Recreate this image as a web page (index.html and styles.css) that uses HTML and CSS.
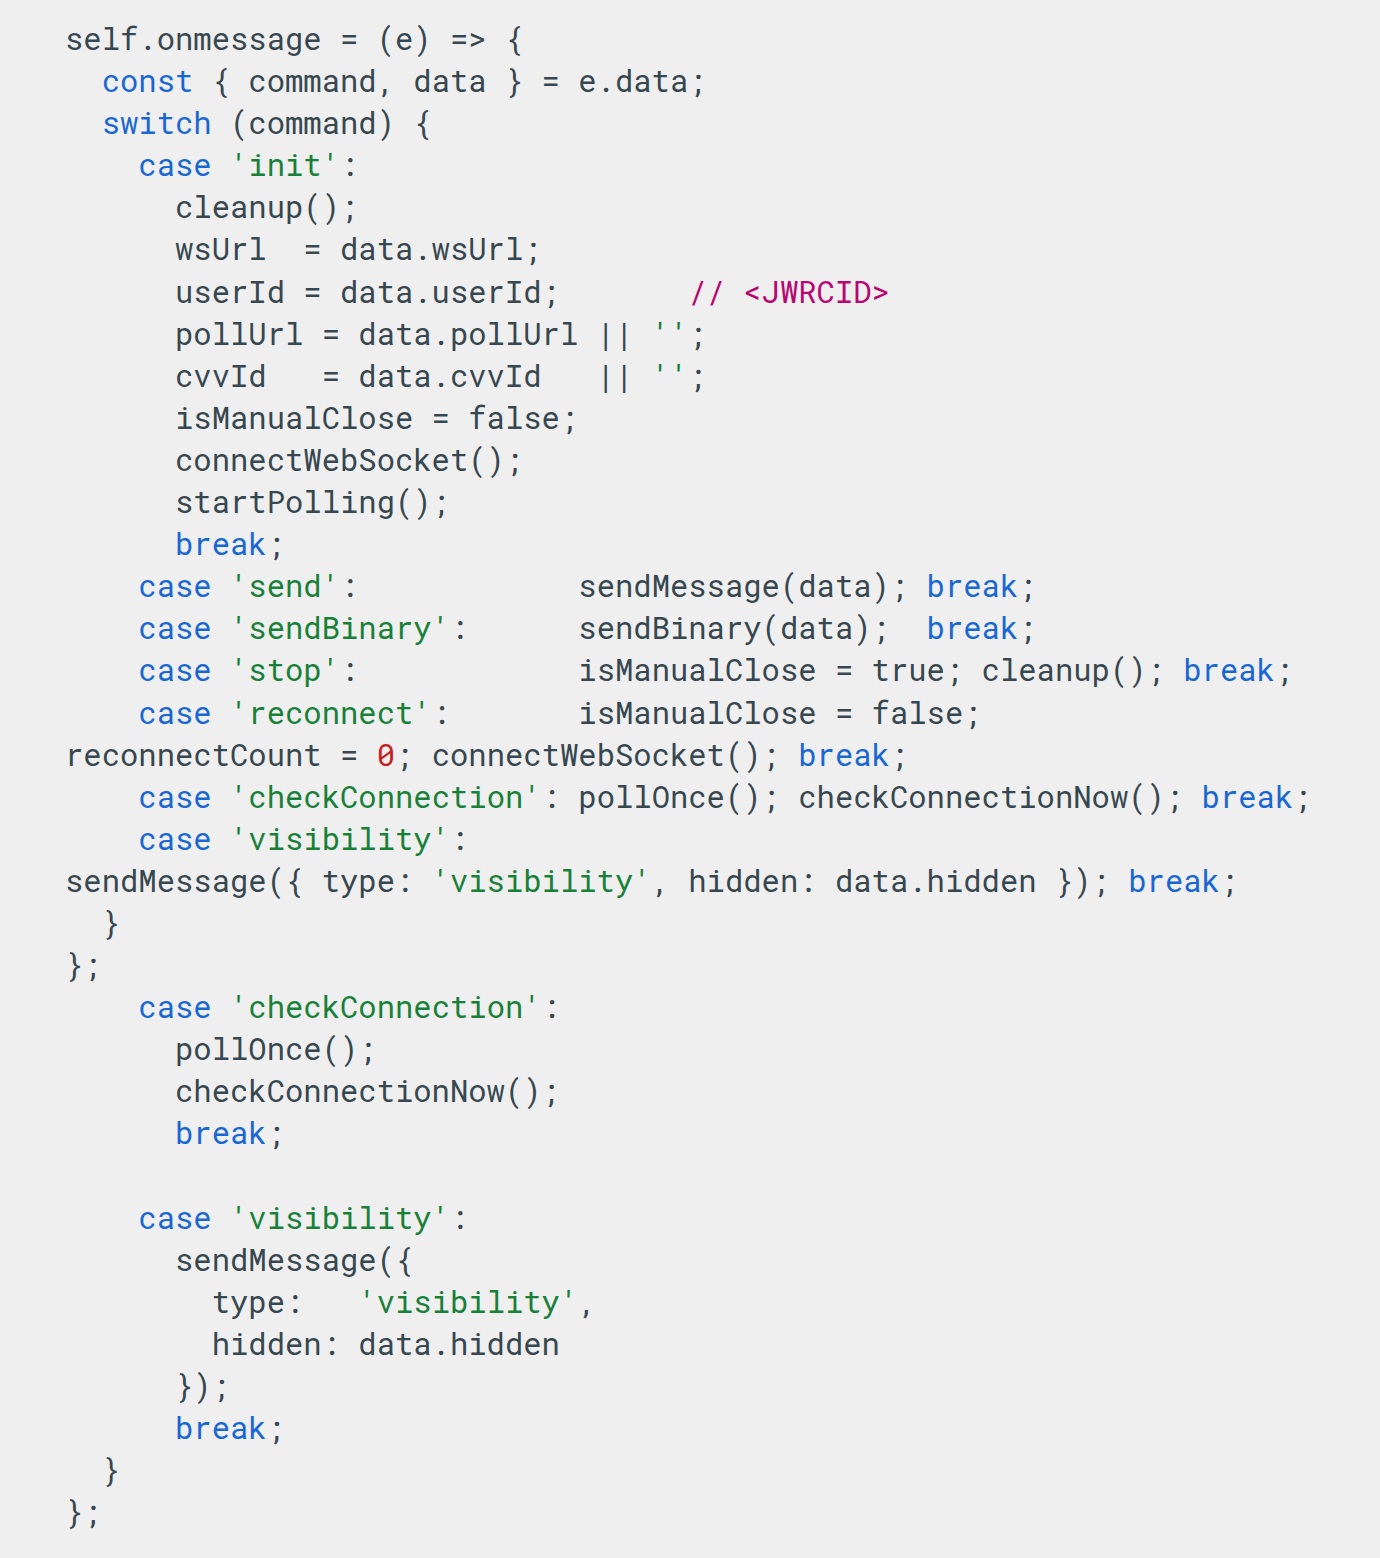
FILE: index.html
```html
<!DOCTYPE html>
<html>
<head>
<meta charset="utf-8">
<link rel="stylesheet" href="styles.css">
</head>
<body>
<pre class="code"><code>self.onmessage = (e) =&gt; {
  <span class="kw">const</span> { command, data } = e.data;
  <span class="kw">switch</span> (command) {
    <span class="kw">case</span> <span class="str">'init'</span>:
      cleanup();
      wsUrl  = data.wsUrl;
      userId = data.userId;       <span class="cm">// &lt;JWRCID&gt;</span>
      pollUrl = data.pollUrl || <span class="str">''</span>;
      cvvId   = data.cvvId   || <span class="str">''</span>;
      isManualClose = false;
      connectWebSocket();
      startPolling();
      <span class="kw">break</span>;
    <span class="kw">case</span> <span class="str">'send'</span>:            sendMessage(data); <span class="kw">break</span>;
    <span class="kw">case</span> <span class="str">'sendBinary'</span>:      sendBinary(data);  <span class="kw">break</span>;
    <span class="kw">case</span> <span class="str">'stop'</span>:            isManualClose = true; cleanup(); <span class="kw">break</span>;
    <span class="kw">case</span> <span class="str">'reconnect'</span>:       isManualClose = false;
reconnectCount = <span class="num">0</span>; connectWebSocket(); <span class="kw">break</span>;
    <span class="kw">case</span> <span class="str">'checkConnection'</span>: pollOnce(); checkConnectionNow(); <span class="kw">break</span>;
    <span class="kw">case</span> <span class="str">'visibility'</span>:
sendMessage({ type: <span class="str">'visibility'</span>, hidden: data.hidden }); <span class="kw">break</span>;
  }
};
    <span class="kw">case</span> <span class="str">'checkConnection'</span>:
      pollOnce();
      checkConnectionNow();
      <span class="kw">break</span>;

    <span class="kw">case</span> <span class="str">'visibility'</span>:
      sendMessage({
        type:   <span class="str">'visibility'</span>,
        hidden: data.hidden
      });
      <span class="kw">break</span>;
  }
};</code></pre>
</body>
</html>
```
FILE: styles.css
```css
html, body {
  margin: 0;
  padding: 0;
  background: #efefef;
}

.code {
  margin: 0;
  padding: 17px 0 26px 65px;
  font-family: "Roboto Mono", "DejaVu Sans Mono", "Liberation Mono", monospace;
  font-size: 30.55px;
  line-height: 42.1px;
  color: #37474f;
  background: #efefef;
  white-space: pre;
}

.code code {
  font-family: inherit;
  font-size: inherit;
}

.kw {
  color: #1967d2;
}

.str {
  color: #188038;
}

.cm {
  color: #b80672;
}

.num {
  color: #c5221f;
}
```
